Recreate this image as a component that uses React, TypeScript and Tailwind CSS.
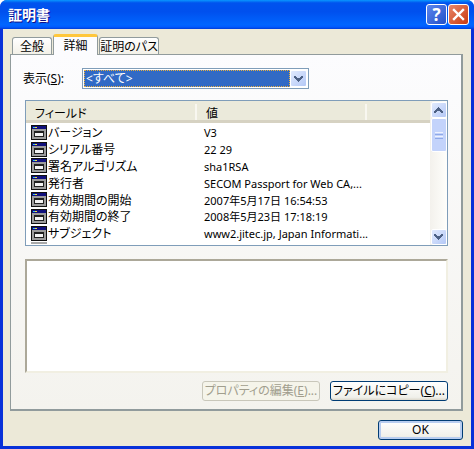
const jp = "font-['Noto_Sans','Noto_Sans_CJK_JP',sans-serif] [font-feature-settings:'palt']"

const fields = [
  ['バージョン', 'V3'],
  ['シリアル番号', '22 29'],
  ['署名アルゴリズム', 'sha1RSA'],
  ['発行者', 'SECOM Passport for Web CA,...'],
  ['有効期間の開始', '2007年5月17日 16:54:53'],
  ['有効期間の終了', '2008年5月23日 17:18:19'],
  ['サブジェクト', 'www2.jitec.jp, Japan Informati...'],
]

function FieldIcon() {
  return (
    <svg width="16" height="15" viewBox="0 0 16 15" className="shrink-0" shapeRendering="crispEdges">
      <rect x="0" y="0" width="16" height="15" fill="#101010" />
      <rect x="1" y="1" width="14" height="3" fill="#10107c" />
      <rect x="2" y="2" width="2" height="1" fill="#30c0f0" />
      <rect x="4" y="2" width="2" height="1" fill="#f0e040" />
      <rect x="1" y="4" width="14" height="10" fill="#9c9c9c" />
      <rect x="3" y="6" width="10" height="6" fill="#202020" />
      <rect x="4" y="8" width="8" height="3" fill="#f4f4f4" />
    </svg>
  )
}

function ArrowGlyph({ down = false }: { down?: boolean }) {
  return (
    <svg width="9" height="6" viewBox="0 0 9 6" shapeRendering="crispEdges" fill="#4d6185">
      {down ? (
        <path d="M0 0h2v1h1v1h3V1h1V0h2v2H8v1H7v1H6v1H5v1H4V5H3V4H2V3H1V2H0z" />
      ) : (
        <path d="M4 0h1v1h1v1h1v1h1v1h1v2H7V5H6V4H3v1H2v1H0V4h1V3h1V2h1V1h1z" />
      )}
    </svg>
  )
}

function ScrollArrow({ down = false }: { down?: boolean }) {
  return (
    <div className="w-[16px] h-[16px] shrink-0 rounded-[2px] border border-white bg-[linear-gradient(135deg,#e1eafe,#b4c8f6)] flex items-center justify-center">
      <ArrowGlyph down={down} />
    </div>
  )
}

function PushButton({ label, disabled = false, className = '' }: { label: React.ReactNode; disabled?: boolean; className?: string }) {
  return (
    <div
      className={`h-[20px] rounded-[3px] border flex items-center justify-center text-[12px] leading-none whitespace-nowrap ${
        disabled
          ? 'border-[#c9c7ba] bg-[#f5f4ea] text-[#a19e8e]'
          : 'border-[#003c74] bg-[linear-gradient(180deg,#ffffff,#f0f0ea_85%,#dcd8cc)] text-black'
      } ${className}`}
    >
      {label}
    </div>
  )
}

function Tab({ label, active = false, width }: { label: string; active?: boolean; width: string }) {
  if (active) {
    return (
      <div className={`${width} h-[21px] -mb-[1px] z-10 border-x border-[#919b9c] rounded-t-[3px] border-t-[3px] border-t-[#ffc73c] bg-[#fcfcfe] flex items-center justify-center text-[12px] pb-[1px] whitespace-nowrap`}>
        {label}
      </div>
    )
  }
  return (
    <div className={`${width} h-[17px] border-x border-t border-[#919b9c] rounded-t-[3px] bg-[linear-gradient(180deg,#ffffff,#f3f1e8)] flex items-center justify-center text-[12px] pt-[1px] whitespace-nowrap`}>
      {label}
    </div>
  )
}

export default function App() {
  return (
    <div className={`w-[474px] h-[449px] flex flex-col bg-[#0831d9] rounded-t-[7px] overflow-hidden text-black ${jp}`}>
      {/* title bar */}
      <div className="h-[29px] shrink-0 pl-[8px] pr-[5px] flex items-center bg-[linear-gradient(180deg,#0997ff_0%,#0053ee_10%,#0050ee_40%,#0066ff_85%,#005bff_93%,#003dd7_100%)]">
        <span className="text-[14px] font-bold text-white [text-shadow:1px_1px_#0f1089] leading-none">証明書</span>
        <div className="ml-auto flex gap-[1px]">
          <div className="w-[21px] h-[21px] rounded-[3px] border border-white bg-[linear-gradient(135deg,#5c86ee,#2250c8)] flex items-center justify-center text-white font-bold text-[17px] leading-none">
            ?
          </div>
          <div className="w-[21px] h-[21px] rounded-[3px] border border-white bg-[linear-gradient(135deg,#e8876a,#c9390f)] flex items-center justify-center">
            <svg width="13" height="13" viewBox="0 0 13 13">
              <path d="M2 2l9 9M11 2l-9 9" stroke="#ffffff" strokeWidth="2.4" strokeLinecap="square" fill="none" />
            </svg>
          </div>
        </div>
      </div>

      {/* client area */}
      <div className="flex-1 mx-[3px] mb-[3px] bg-[#ece9d8] px-[7px] pt-[6px] flex flex-col">
        <div className="h-[19px] pl-[2px] flex items-end gap-[1px] shrink-0">
          <Tab label="全般" width="w-[40px]" />
          <Tab label="詳細" width="w-[45px]" active />
          <Tab label="証明のパス" width="w-[60px]" />
        </div>

        <div className="h-[357px] w-[453px] border border-[#919b9c] border-b-2 border-r-2 bg-[linear-gradient(180deg,#fcfcfe,#f4f3ee)] px-[14px] flex flex-col">
          <div className="mt-[13px] h-[21px] flex items-center shrink-0">
            <span className="w-[59px] -ml-[2px] text-[12px] leading-none">
              表示(<span className="underline">S</span>):
            </span>
            <div className="w-[227px] h-[21px] border border-[#7f9db9] bg-white p-[1px] flex">
              <div className="flex-1 bg-[#316ac5] border border-dotted border-[#e8b040] text-white text-[12px] leading-none flex items-center pl-[1px]">
                &lt;すべて&gt;
              </div>
              <div className="w-[17px] h-[17px] rounded-[2px] border border-white bg-[linear-gradient(135deg,#e1eafe,#b4c8f6)] flex items-center justify-center">
                <ArrowGlyph down />
              </div>
            </div>
          </div>

          {/* field list */}
          <div className="mt-[11px] h-[146px] w-[423px] border border-[#7f9db9] bg-white flex shrink-0">
            <div className="flex-1 min-w-0 flex flex-col">
              <div className="h-[22px] shrink-0 flex items-center pt-[3px] bg-[#ebeadb] border-b-[3px] border-[#d6d2c2] text-[12px] leading-none">
                <div className="w-[171px] pl-[9px] pt-[3px] border-r-2 border-[#f8f7f0] h-[16px] flex items-center">フィールド</div>
                <div className="w-[170px] pl-[9px] pt-[3px] border-r-2 border-[#f8f7f0] h-[16px] flex items-center">値</div>
              </div>
              <div className="flex-1 pl-[5px] pt-[1px] overflow-hidden">
                {fields.map(([name, value]) => (
                  <div key={name} className="h-[16.8px] flex items-center text-[12px] leading-none">
                    <div className="w-[172px] flex items-center gap-[1px] whitespace-nowrap">
                      <FieldIcon />
                      <span className="pt-[2px]">{name}</span>
                    </div>
                    <div className="whitespace-nowrap text-[11px] pl-[1px] pt-[1px]">{value}</div>
                  </div>
                ))}
                <div className="h-[2px] w-[16px] bg-[#a8a8a8]" />
              </div>
            </div>
            <div className="w-[17px] shrink-0 pt-[1px] bg-[linear-gradient(90deg,#f3f1ec,#fefefb)] flex flex-col items-center">
              <ScrollArrow />
              <div className="w-[16px] h-[34px] rounded-[2px] border border-white bg-[#c3d3fb] flex flex-col items-center justify-center gap-[1px]">
                <div className="w-[8px] h-[1px] bg-[#eef2fe]" />
                <div className="w-[8px] h-[1px] bg-[#8fa9e8]" />
                <div className="w-[8px] h-[1px] bg-[#eef2fe]" />
                <div className="w-[8px] h-[1px] bg-[#8fa9e8]" />
              </div>
              <div className="flex-1" />
              <ScrollArrow down />
            </div>
          </div>

          {/* preview */}
          <div className="mt-[13px] h-[114px] w-[423px] border-2 border-[#aca899] border-r-[#f1efe2] border-b-[#f1efe2] bg-white shrink-0" />

          <div className="mt-[8px] flex justify-end gap-[10px] mr-[-1px]">
            <PushButton disabled label={<>プロパティの編集(<span className="underline">E</span>)...</>} className="w-[118px]" />
            <PushButton label={<>ファイルにコピー(<span className="underline">C</span>)...</>} className="w-[118px]" />
          </div>
        </div>

        <div className="mt-[9px] flex justify-end pr-[1px]">
          <PushButton label="OK" className="w-[85px] border-[#003c74] shadow-[inset_0_0_0_2px_#b8cdf0]" />
        </div>
      </div>
    </div>
  )
}
